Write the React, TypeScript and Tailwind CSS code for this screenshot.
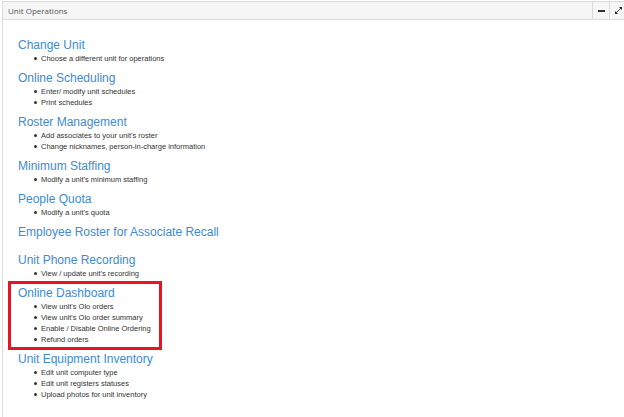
const sections: { title: string; items: string[]; boxed?: boolean }[] = [
  { title: 'Change Unit', items: ['Choose a different unit for operations'] },
  { title: 'Online Scheduling', items: ['Enter/ modify unit schedules', 'Print schedules'] },
  {
    title: 'Roster Management',
    items: ["Add associates to your unit's roster", 'Change nicknames, person-in-charge information'],
  },
  { title: 'Minimum Staffing', items: ["Modify a unit's minimum staffing"] },
  { title: 'People Quota', items: ["Modify a unit's quota"] },
  { title: 'Employee Roster for Associate Recall', items: [] },
  { title: 'Unit Phone Recording', items: ["View / update unit's recording"] },
  {
    title: 'Online Dashboard',
    items: ["View unit's Olo orders", "View unit's Olo order summary", 'Enable / Disable Online Ordering', 'Refund orders'],
    boxed: true,
  },
  {
    title: 'Unit Equipment Inventory',
    items: ['Edit unit computer type', 'Edit unit registers statuses', 'Upload photos for unit inventory'],
  },
];

function Section({ title, items, boxed }: { title: string; items: string[]; boxed?: boolean }) {
  return (
    <div className={items.length === 0 ? 'relative mb-[13px]' : 'relative mb-[7px]'}>
      <div className="text-[12px] leading-[15px] text-[#3d8bd1]">{title}</div>
      {items.length > 0 && (
        <ul>
          {items.map(item => (
            <li key={item} className="flex items-center text-[7.5px] leading-[11px] text-[#333]">
              <span className="ml-[16px] mr-[4px] w-[3px] h-[3px] rounded-full bg-[#333]" />
              {item}
            </li>
          ))}
        </ul>
      )}
      {boxed && (
        <div className="absolute -left-[10px] -top-[5.5px] w-[154px] h-[69px] border-[3px] border-[#e8141f]" />
      )}
    </div>
  );
}

export default function App() {
  return (
    <div className="w-[624px] h-[417px] bg-white overflow-hidden" style={{ fontFamily: '"Liberation Sans", Arial, sans-serif' }}>
      <div className="ml-[2px] mt-[1px] w-[625px] h-[420px] border border-[#dcdcdc]">
        <div className="flex items-center h-[18px] bg-[#f6f6f6] border-b border-[#dcdcdc]">
          <span className="pl-[5px] text-[8px] text-[#555]" style={{ fontFamily: '"Open Sans", sans-serif' }}>
            Unit Operations
          </span>
          <div className="ml-auto flex h-full">
            <div className="w-[17px] h-full flex items-center justify-center border-l border-[#dcdcdc]">
              <span className="w-[7px] h-[2px] bg-[#333]" />
            </div>
            <div className="w-[17px] h-full flex items-center justify-center border-l border-[#dcdcdc]">
              <svg width="9" height="9" viewBox="0 0 9 9">
                <line x1="1.5" y1="7.5" x2="7.5" y2="1.5" stroke="#444" strokeWidth="1" />
                <polygon points="5,1 8,1 8,4" fill="#222" />
                <polygon points="1,5 1,8 4,8" fill="#222" />
              </svg>
            </div>
          </div>
        </div>
        <div className="pl-[15px] pt-[18px]">
          {sections.map(s => (
            <Section key={s.title} {...s} />
          ))}
        </div>
      </div>
    </div>
  );
}
